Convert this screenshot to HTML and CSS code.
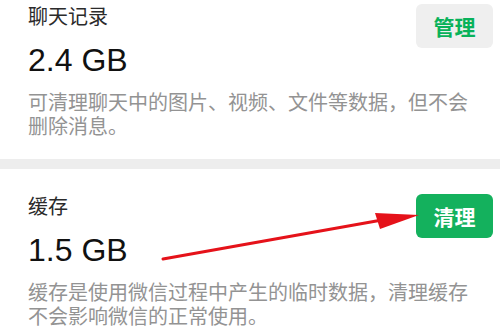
FILE: index.html
```html
<!DOCTYPE html>
<html lang="zh-CN">
<head>
    <meta charset="UTF-8">
    <meta name="viewport" content="width=device-width, initial-scale=1.0">
    <title>存储空间</title>
    <link rel="stylesheet" href="styles.css">
</head>
<body>
    <div class="page">
        <div class="item">
            <div class="item-title">聊天记录</div>
            <div class="item-size">2.4 GB</div>
            <button class="btn btn-manage">管理</button>
            <p class="item-desc">可清理聊天中的图片、视频、文件等数据，但不会删除消息。</p>
        </div>

        <div class="divider"></div>

        <div class="item">
            <div class="item-title">缓存</div>
            <div class="item-size">1.5 GB</div>
            <button class="btn btn-clean">清理</button>
            <p class="item-desc">缓存是使用微信过程中产生的临时数据，清理缓存不会影响微信的正常使用。</p>
        </div>
    </div>

    <!-- 标注箭头 -->
    <svg class="arrow" width="500" height="333" viewBox="0 0 500 333">
        <line x1="163" y1="259" x2="382" y2="220" stroke="#e5121a" stroke-width="3" stroke-linecap="round"/>
        <polygon points="375,213 419,215 380,229" fill="#e5121a"/>
    </svg>
</body>
</html>
```

FILE: styles.css
```css
body {
    margin: 0;
    background: #fff;
    font-family: "Liberation Sans", "Noto Sans CJK SC", sans-serif;
    width: 500px;
    height: 333px;
    overflow: hidden;
    position: relative;
}
.page {
    margin-top: -21px;
}
.item {
    display: grid;
    grid-template-columns: 1fr auto;
    padding: 24px 7px 21px 28px;
}
.item-title {
    grid-column: 1;
    grid-row: 1;
    font-size: 20px;
    line-height: 28px;
    color: #2b2b2b;
}
.item-size {
    grid-column: 1;
    grid-row: 2;
    margin-top: 9px;
    font-size: 32px;
    line-height: 40px;
    color: #111;
}
.btn {
    grid-column: 2;
    grid-row: 1 / span 2;
    align-self: start;
    margin-top: 1px;
    width: 77px;
    height: 44px;
    border: none;
    border-radius: 6px;
    font-family: "Noto Sans CJK SC", sans-serif;
    font-size: 21px;
    font-weight: bold;
    padding: 0;
}
.btn-manage {
    background: #efefef;
    color: #08b25a;
}
.btn-clean {
    background: #14b15d;
    color: #fff;
}
.item-desc {
    grid-column: 1 / span 2;
    margin: 10px 0 0;
    max-width: 450px;
    font-family: "Noto Sans CJK SC", sans-serif;
    font-size: 20px;
    line-height: 24px;
    color: #939393;
}
.divider {
    height: 10px;
    background: #ededed;
}
.arrow {
    position: absolute;
    top: 0;
    left: 0;
    pointer-events: none;
}
```
